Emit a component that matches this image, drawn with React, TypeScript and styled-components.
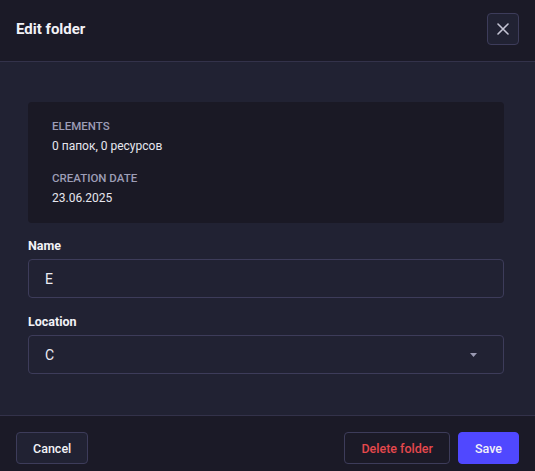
import React from "react";
import styled, { createGlobalStyle } from "styled-components";

const Global = createGlobalStyle`
  html, body { margin: 0; padding: 0; background: #1b1a27; }
  body { font-family: Roboto, "Noto Sans", sans-serif; color: #e8e8f0; }
  * { box-sizing: border-box; }
`;

const Modal = styled.div`
  width: 535px;
  display: flex;
  flex-direction: column;
`;

const Header = styled.header`
  display: flex;
  align-items: center;
  justify-content: space-between;
  padding: 13px 16px 16px 16px;
  height: 62px;
  background: #1b1a27;
  border-bottom: 1px solid #33324a;
`;

const Title = styled.h2`
  margin: 0;
  font-size: 15px;
  font-weight: 700;
  color: #f2f2f7;
  line-height: 20px;
`;

const CloseButton = styled.button`
  width: 32px;
  height: 32px;
  display: flex;
  align-items: center;
  justify-content: center;
  padding: 0;
  background: #212233;
  border: 1px solid #3d3c5a;
  border-radius: 4px;
  color: #c4c4d4;
`;

const Body = styled.main`
  background: #212233;
  padding: 40px 31px 41px 28px;
  display: flex;
  flex-direction: column;
`;

const InfoCard = styled.section`
  background: #1a1925;
  border-radius: 4px;
  padding: 16px 24px 15px;
  display: flex;
  flex-direction: column;
  gap: 14px;
  margin-bottom: 14px;
`;

const InfoGroup = styled.div`
  display: flex;
  flex-direction: column;
  gap: 2px;
`;

const InfoLabel = styled.div`
  font-size: 11.5px;
  line-height: 16px;
  font-weight: 500;
  text-transform: uppercase;
  color: #9d9db6;
`;

const InfoValue = styled.div`
  font-size: 12px;
  line-height: 20px;
  color: #e6e6ee;
`;

const Field = styled.div<{ $last?: boolean }>`
  display: flex;
  flex-direction: column;
  gap: 4px;
  margin-bottom: ${(p) => (p.$last ? "0" : "15px")};
`;

const Label = styled.label`
  font-size: 12.5px;
  line-height: 18px;
  font-weight: 700;
  color: #f2f2f7;
`;

const Control = styled.div`
  height: 39px;
  border: 1px solid #3d3c5a;
  border-radius: 4px;
  background: #212233;
  display: flex;
  align-items: center;
  justify-content: space-between;
  padding: 0 26px 0 16px;
  font-size: 14px;
  color: #ececf3;
`;

const Footer = styled.footer`
  display: flex;
  align-items: center;
  justify-content: space-between;
  padding: 16px;
  background: #1b1a27;
  border-top: 1px solid #33324a;
`;

const Actions = styled.div`
  display: flex;
  gap: 8px;
`;

const Button = styled.button<{ $variant?: "default" | "danger" | "primary" }>`
  height: 32px;
  padding: 0 16px;
  border-radius: 4px;
  font-family: inherit;
  font-size: 12.5px;
  font-weight: 500;
  border: 1px solid
    ${(p) => (p.$variant === "primary" ? "#5048ff" : "#3d3c5a")};
  background: ${(p) =>
    p.$variant === "primary"
      ? "#5048ff"
      : p.$variant === "danger"
      ? "#1b1a27"
      : "#212233"};
  color: ${(p) => (p.$variant === "danger" ? "#e5484d" : "#f2f2f7")};
`;

export default function App() {
  return (
    <Modal>
      <Global />
      <Header>
        <Title>Edit folder</Title>
        <CloseButton aria-label="Close">
          <svg width="12" height="12" viewBox="0 0 12 12" fill="none">
            <path d="M1 1L11 11M11 1L1 11" stroke="currentColor" strokeWidth="1.6" strokeLinecap="round" />
          </svg>
        </CloseButton>
      </Header>
      <Body>
        <InfoCard>
          <InfoGroup>
            <InfoLabel>Elements</InfoLabel>
            <InfoValue>0 папок, 0 ресурсов</InfoValue>
          </InfoGroup>
          <InfoGroup>
            <InfoLabel>Creation date</InfoLabel>
            <InfoValue>23.06.2025</InfoValue>
          </InfoGroup>
        </InfoCard>
        <Field>
          <Label>Name</Label>
          <Control>E</Control>
        </Field>
        <Field $last>
          <Label>Location</Label>
          <Control>
            <span>C</span>
            <svg width="7" height="4" viewBox="0 0 7 4">
              <path d="M0 0H7L3.5 4Z" fill="#9a9ab2" />
            </svg>
          </Control>
        </Field>
      </Body>
      <Footer>
        <Button>Cancel</Button>
        <Actions>
          <Button $variant="danger">Delete folder</Button>
          <Button $variant="primary">Save</Button>
        </Actions>
      </Footer>
    </Modal>
  );
}
